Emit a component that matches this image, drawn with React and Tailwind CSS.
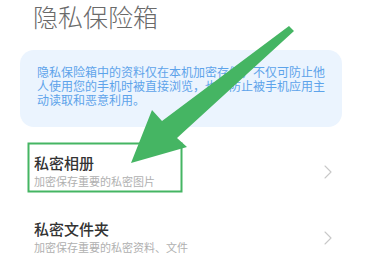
import { ChevronRight } from "lucide-react";

const ROWS = [
  { title: "私密相册", desc: "加密保存重要的私密图片" },
  { title: "私密文件夹", desc: "加密保存重要的私密资料、文件" },
];

export default function App() {
  return (
    <div className="relative w-[390px] h-[260px] overflow-hidden bg-white font-['Noto_Sans_CJK_SC','Noto_Sans',sans-serif]">
      <h1 className="pl-[33px] pt-[1px] text-[25px] leading-[30px] font-light text-[#6a6a6a]">
        隐私保险箱
      </h1>

      <div className="mt-[19px] ml-[20px] w-[322px] rounded-[14px] bg-[#ebf4fe] pl-[17px] pr-[15px] pt-[15px] pb-[20px]">
        <p className="text-[12px] leading-[14px] text-[#5da3ea]">
          隐私保险箱中的资料仅在本机加密存储，不仅可防止他人使用您的手机时被直接浏览，也可防止被手机应用主动读取和恶意利用。
        </p>
      </div>

      <div className="mt-[26px] flex flex-col gap-[29px]">
        {ROWS.map((row) => (
          <div key={row.title} className="flex items-center justify-between pl-[34px] pr-[50px]">
            <div>
              <div className="text-[15px] leading-[20px] font-medium text-[#333]">{row.title}</div>
              <div className="text-[11px] leading-[17px] text-[#b0b0b0]">{row.desc}</div>
            </div>
            <ChevronRight size={24} strokeWidth={1.1} className="text-[#c8c8c8]" />
          </div>
        ))}
      </div>

      {/* annotation overlay */}
      <svg className="pointer-events-none absolute inset-0" width="390" height="260" viewBox="0 0 390 260">
        <rect x="28.5" y="143.5" width="153" height="48" fill="none" stroke="#45b563" strokeWidth="2" />
        <polygon
          points="289,26 294,31 177,138 187,147 131,163 152,110 162,121"
          fill="#45b563"
        />
      </svg>
    </div>
  );
}
